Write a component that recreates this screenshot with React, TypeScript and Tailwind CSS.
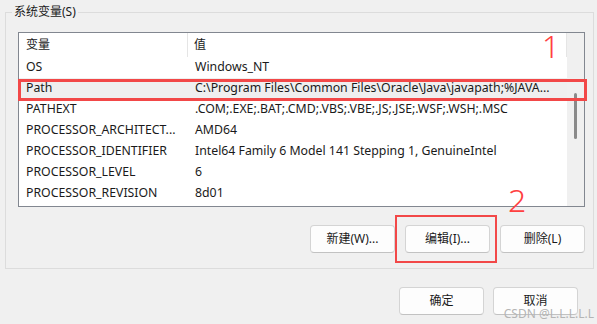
const rows = [
  { name: 'OS', value: 'Windows_NT' },
  { name: 'Path', value: 'C:\\Program Files\\Common Files\\Oracle\\Java\\javapath;%JAVA...', active: true },
  { name: 'PATHEXT', value: '.COM;.EXE;.BAT;.CMD;.VBS;.VBE;.JS;.JSE;.WSF;.WSH;.MSC' },
  { name: 'PROCESSOR_ARCHITECT...', value: 'AMD64' },
  { name: 'PROCESSOR_IDENTIFIER', value: 'Intel64 Family 6 Model 141 Stepping 1, GenuineIntel' },
  { name: 'PROCESSOR_LEVEL', value: '6' },
  { name: 'PROCESSOR_REVISION', value: '8d01' },
]

function WinButton({ label }: { label: string }) {
  return (
    <button
      type="button"
      className="flex h-[28px] w-[85px] items-center justify-center rounded-[4px] border border-[#d4d4d4] border-b-[#c2c2c2] bg-[#fdfdfd] text-[12px] text-[#1a1a1a]"
    >
      {label}
    </button>
  )
}

export default function App() {
  return (
    <div className="relative h-[324px] w-[597px] overflow-hidden bg-[#f0f0f0] font-['Noto_Sans','Noto_Sans_CJK_SC',sans-serif] text-[12px] text-[#1a1a1a]">
      <fieldset className="mx-[5px] mt-[4px] h-[265px] border border-[#dcdcdc] pl-[6px] pr-[8px]">
        <legend className="px-[2px] leading-[16px]">系统变量(S)</legend>

        <div className="mt-[12px] ml-[6px] flex h-[175px] w-[567px] border border-[#828790] bg-white">
          <div className="flex-1">
            <div className="flex h-[24px] items-center">
              <div className="flex h-full w-[169px] items-center border-r border-[#e5e5e5] pl-[7px]">变量</div>
              <div className="flex h-full flex-1 items-center border-r border-[#e5e5e5] pl-[6px]">值</div>
            </div>
            {rows.map((r) => (
              <div key={r.name} className={`flex h-[21px] items-center text-[12.3px] ${r.active ? 'bg-[#efefef]' : ''}`}>
                <div className="w-[169px] truncate pl-[7px]">{r.name}</div>
                <div className="flex-1 truncate pl-[7px]">{r.value}</div>
              </div>
            ))}
          </div>
          <div className="flex w-[17px] justify-center bg-[#f0f0f0] pt-[60px]">
            <div className="h-[46px] w-[3px] rounded-full bg-[#8a8a8a]" />
          </div>
        </div>

        <div className="mt-[18px] flex w-[573px] justify-end gap-[10px]">
          <WinButton label="新建(W)..." />
          <WinButton label="编辑(I)..." />
          <WinButton label="删除(L)" />
        </div>
      </fieldset>

      <div className="mt-[18px] flex justify-end gap-[9px] pr-[19px]">
        <WinButton label="确定" />
        <WinButton label="取消" />
      </div>

      {/* annotations drawn on top of the dialog */}
      <div className="absolute left-[18px] top-[79px] h-[22px] w-[569px] border-[3px] border-[#f24848]" />
      <div className="absolute left-[395px] top-[215px] h-[48px] w-[102px] border-[2px] border-[#f24848]" />
      <div className="absolute left-[542px] top-[26px] text-[31px] font-light leading-[40px] text-[#ff4040]">1</div>
      <div className="absolute left-[508px] top-[180px] text-[32px] font-light leading-[40px] text-[#ff4040]">2</div>
      <div className="absolute bottom-[3px] right-[3px] text-[12px] leading-[14px] text-[#b4b4b4]">CSDN @L.L.L.L.L</div>
    </div>
  )
}
